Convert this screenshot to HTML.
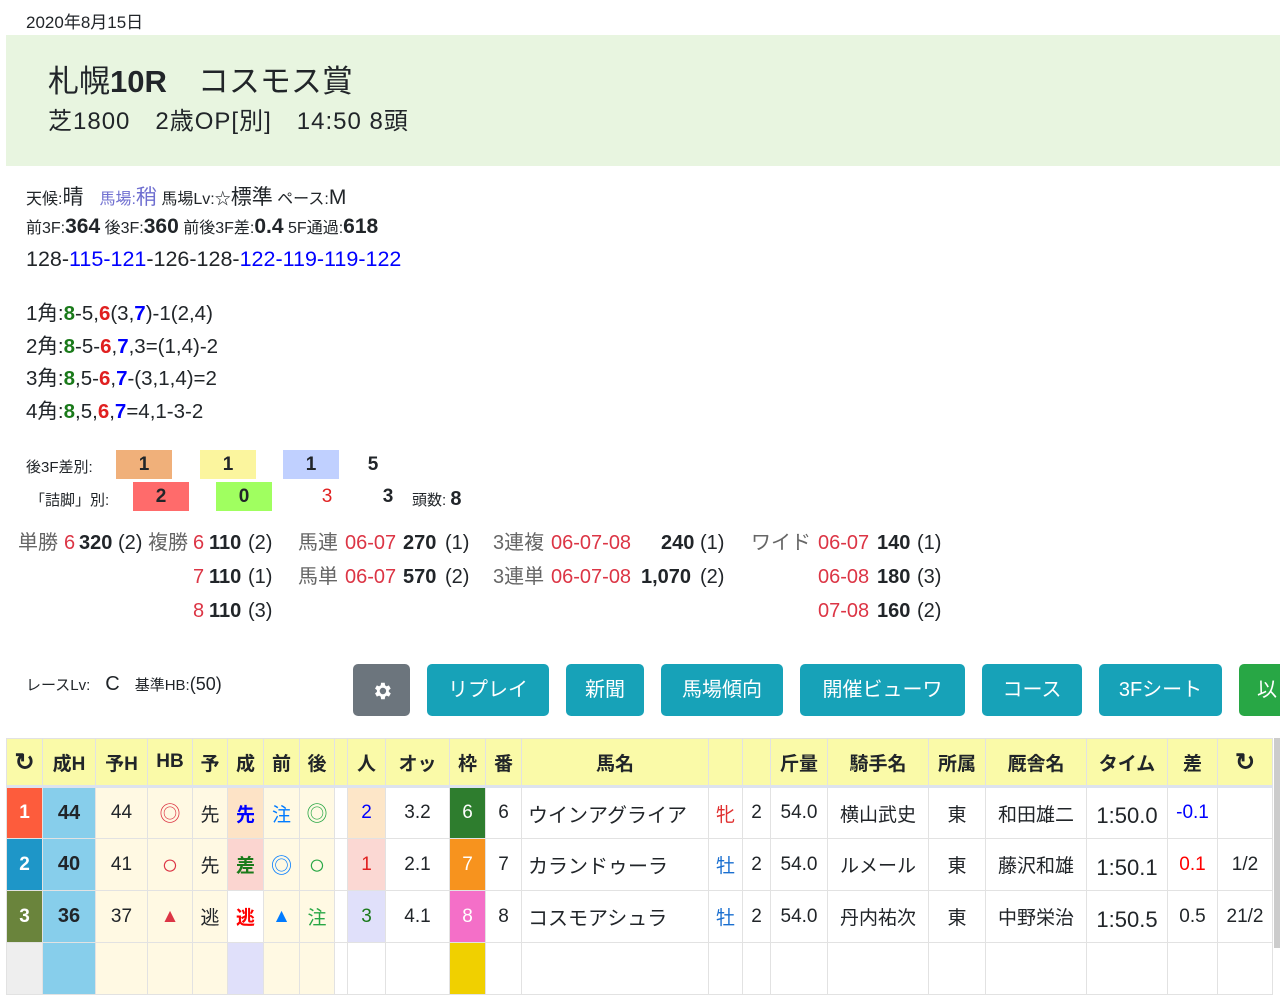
<!DOCTYPE html>
<html><head><meta charset="utf-8"><style>
*{box-sizing:border-box}
body{margin:0;width:1280px;height:948px;overflow:hidden;background:#fff;font-family:"Liberation Sans","Noto Sans CJK JP",sans-serif;color:#212529;position:relative}
.a{position:absolute;white-space:nowrap}
.b{font-weight:bold}
.r{color:#e02020}.bl{color:#0000ff}.g{color:#1a7a1a}.rr{color:#dc3545}.gy{color:#666}
.box{position:absolute;height:29px;width:56px;text-align:center;font-weight:bold;font-size:19px;line-height:29px}
.btn{position:absolute;top:664px;height:52px;border-radius:5px;background:#17a2b8;color:#fff;font-size:20px;line-height:52px;text-align:center}
table{position:absolute;left:6px;top:738px;border-collapse:collapse;table-layout:fixed;width:1266px}
td,th{border:1px solid #e2e2e2;text-align:center;padding:0;font-size:19px;font-weight:normal;overflow:hidden;white-space:nowrap}
th{background:#fafaa8;font-weight:bold;height:48px;border-bottom:3px solid #dde3ee}
td{height:52px}
.cr{background:#fff9e3}
.big{font-size:21px}
.p{position:absolute;white-space:nowrap;font-size:20px;line-height:30px}
</style></head><body>
<div class="a" style="left:26px;top:8px;font-size:17px">2020年8月15日</div>
<div class="a" style="left:6px;top:35px;width:1274px;height:131px;background:#e8f5e0"></div>
<div class="a" style="left:48px;top:56px;font-size:31px">札幌<b>10R</b>　コスモス賞</div>
<div class="a" style="left:48px;top:101px;font-size:24px;letter-spacing:1px">芝1800　2歳OP[別]　14:50 8頭</div>

<div class="a" style="left:26px;top:181px;font-size:16px">天候:<span style="font-size:21px">晴</span>　<span style="color:#6f6fd0">馬場:<span style="font-size:21px">稍</span></span> 馬場Lv:☆<span style="font-size:21px">標準</span> ペース:<span style="font-size:21px">M</span></div>
<div class="a" style="left:26px;top:214px;font-size:16px">前3F:<b style="font-size:21px">364</b> 後3F:<b style="font-size:21px">360</b> 前後3F差:<b style="font-size:21px">0.4</b> 5F通過:<b style="font-size:21px">618</b></div>
<div class="a" style="left:26px;top:247px;font-size:21.5px">128-<span class="bl">115-121</span>-126-128-<span class="bl">122-119-119-122</span></div>
<div class="a" style="left:26px;top:298px;font-size:20.5px;line-height:32.5px">1角:<b class="g">8</b>-5,<b class="r">6</b>(3,<b class="bl">7</b>)-1(2,4)<br>2角:<b class="g">8</b>-5-<b class="r">6</b>,<b class="bl">7</b>,3=(1,4)-2<br>3角:<b class="g">8</b>,5-<b class="r">6</b>,<b class="bl">7</b>-(3,1,4)=2<br>4角:<b class="g">8</b>,5,<b class="r">6</b>,<b class="bl">7</b>=4,1-3-2</div>

<div class="a" style="left:26px;top:456px;font-size:15px">後3F差別:</div>
<div class="box" style="left:116px;top:450px;background:#f0b07a">1</div>
<div class="box" style="left:200px;top:450px;background:#fbf59e">1</div>
<div class="box" style="left:283px;top:450px;background:#c0d0ff">1</div>
<div class="box" style="left:345px;top:450px">5</div>
<div class="a" style="left:30px;top:489px;font-size:15px">「詰脚」別:</div>
<div class="box" style="left:133px;top:482px;background:#ff6b6b">2</div>
<div class="box" style="left:216px;top:482px;background:#a0ff60">0</div>
<div class="box r" style="left:299px;top:482px;font-weight:normal">3</div>
<div class="box" style="left:360px;top:482px">3</div>
<div class="a" style="left:412px;top:488px;font-size:15px">頭数: <b style="font-size:20px">8</b></div>

<div class="p gy" style="left:18px;top:528px">単勝</div><div class="p rr" style="left:64px;top:528px">6</div><div class="p b" style="left:79px;top:528px">320</div><div class="p" style="left:118px;top:528px">(2)</div>
<div class="p gy" style="left:148px;top:528px">複勝</div><div class="p rr" style="left:193px;top:528px">6</div><div class="p b" style="left:209px;top:528px">110</div><div class="p" style="left:248px;top:528px">(2)</div>
<div class="p rr" style="left:193px;top:562px">7</div><div class="p b" style="left:209px;top:562px">110</div><div class="p" style="left:248px;top:562px">(1)</div>
<div class="p rr" style="left:193px;top:596px">8</div><div class="p b" style="left:209px;top:596px">110</div><div class="p" style="left:248px;top:596px">(3)</div>
<div class="p gy" style="left:298px;top:528px">馬連</div><div class="p rr" style="left:345px;top:528px">06-07</div><div class="p b" style="left:403px;top:528px">270</div><div class="p" style="left:445px;top:528px">(1)</div>
<div class="p gy" style="left:298px;top:562px">馬単</div><div class="p rr" style="left:345px;top:562px">06-07</div><div class="p b" style="left:403px;top:562px">570</div><div class="p" style="left:445px;top:562px">(2)</div>
<div class="p gy" style="left:493px;top:528px">3連複</div><div class="p rr" style="left:551px;top:528px">06-07-08</div><div class="p b" style="left:661px;top:528px">240</div><div class="p" style="left:700px;top:528px">(1)</div>
<div class="p gy" style="left:493px;top:562px">3連単</div><div class="p rr" style="left:551px;top:562px">06-07-08</div><div class="p b" style="left:641px;top:562px">1,070</div><div class="p" style="left:700px;top:562px">(2)</div>
<div class="p gy" style="left:751px;top:528px">ワイド</div><div class="p rr" style="left:818px;top:528px">06-07</div><div class="p b" style="left:877px;top:528px">140</div><div class="p" style="left:917px;top:528px">(1)</div>
<div class="p rr" style="left:818px;top:562px">06-08</div><div class="p b" style="left:877px;top:562px">180</div><div class="p" style="left:917px;top:562px">(3)</div>
<div class="p rr" style="left:818px;top:596px">07-08</div><div class="p b" style="left:877px;top:596px">160</div><div class="p" style="left:917px;top:596px">(2)</div>

<div class="a" style="left:26px;top:673px;font-size:15px">レースLv:　<span style="font-size:20px">C</span>　基準HB:<span style="font-size:18px">(50)</span></div>
<div class="btn" style="left:353px;width:57px;background:#6c757d"><svg width="22" height="22" viewBox="0 0 24 24" style="vertical-align:middle"><path fill="#fff" d="M19.4 13a7.5 7.5 0 0 0 0-2l2.1-1.6-2-3.5-2.5 1a7 7 0 0 0-1.7-1L15 3h-4l-.4 2.9a7 7 0 0 0-1.7 1l-2.5-1-2 3.5L6.5 11a7.5 7.5 0 0 0 0 2l-2.1 1.6 2 3.5 2.5-1a7 7 0 0 0 1.7 1L11 21h4l.4-2.9a7 7 0 0 0 1.7-1l2.5 1 2-3.5zM13 15.5a3.5 3.5 0 1 1 0-7 3.5 3.5 0 0 1 0 7z"/></svg></div>
<div class="btn" style="left:427px;width:122px">リプレイ</div>
<div class="btn" style="left:566px;width:78px">新聞</div>
<div class="btn" style="left:661px;width:122px">馬場傾向</div>
<div class="btn" style="left:800px;width:165px">開催ビューワ</div>
<div class="btn" style="left:982px;width:100px">コース</div>
<div class="btn" style="left:1099px;width:123px">3Fシート</div>
<div class="btn" style="left:1239px;width:60px;background:#28a745;text-align:left;padding-left:18px">以</div>

<table>
<colgroup><col style="width:36px"><col style="width:53px"><col style="width:52px"><col style="width:45px"><col style="width:35px"><col style="width:36px"><col style="width:36px"><col style="width:35px"><col style="width:13px"><col style="width:38px"><col style="width:64px"><col style="width:36px"><col style="width:36px"><col style="width:187px"><col style="width:34px"><col style="width:28px"><col style="width:57px"><col style="width:101px"><col style="width:57px"><col style="width:101px"><col style="width:81px"><col style="width:50px"><col style="width:55px"></colgroup>
<tr><th style="font-size:24px">↻</th><th>成H</th><th>予H</th><th>HB</th><th>予</th><th>成</th><th>前</th><th>後</th><th></th><th>人</th><th>オッ</th><th>枠</th><th>番</th><th>馬名</th><th></th><th></th><th>斤量</th><th>騎手名</th><th>所属</th><th>厩舎名</th><th>タイム</th><th>差</th><th style="font-size:24px">↻</th></tr>
<tr><td style="background:#fd5c3c;color:#fff;font-weight:bold">1</td><td style="background:#87ceeb;font-weight:bold;font-size:20px">44</td><td class="cr">44</td><td class="cr big" style="color:#dc3545">◎</td><td class="cr">先</td><td style="background:#fde3c6;color:#0000ff;font-weight:bold">先</td><td class="cr" style="color:#007bff">注</td><td class="cr big" style="color:#28a745">◎</td><td></td><td style="background:#fde6c8;color:#0000ff">2</td><td>3.2</td><td style="background:#2e7d2e;color:#fff">6</td><td>6</td><td style="text-align:left;padding-left:6px;font-size:20px">ウインアグライア</td><td style="color:#e03030">牝</td><td>2</td><td>54.0</td><td>横山武史</td><td>東</td><td>和田雄二</td><td style="font-size:22px;padding-top:6px">1:50.0</td><td style="color:#0000ff">-0.1</td><td></td></tr>
<tr><td style="background:#1e96c8;color:#fff;font-weight:bold">2</td><td style="background:#87ceeb;font-weight:bold;font-size:20px">40</td><td class="cr">41</td><td class="cr" style="color:#dc3545;font-size:28px">○</td><td class="cr">先</td><td style="background:#fbd5d0;color:#1a7a1a;font-weight:bold">差</td><td class="cr big" style="color:#007bff">◎</td><td class="cr" style="color:#28a745;font-size:28px">○</td><td></td><td style="background:#fbd8d3;color:#e02020">1</td><td>2.1</td><td style="background:#f7931e;color:#fff">7</td><td>7</td><td style="text-align:left;padding-left:6px;font-size:20px">カランドゥーラ</td><td style="color:#1a6fd0">牡</td><td>2</td><td>54.0</td><td>ルメール</td><td>東</td><td>藤沢和雄</td><td style="font-size:22px;padding-top:6px">1:50.1</td><td style="color:#ff0000">0.1</td><td>1/2</td></tr>
<tr><td style="background:#6a843c;color:#fff;font-weight:bold">3</td><td style="background:#87ceeb;font-weight:bold;font-size:20px">36</td><td class="cr">37</td><td class="cr" style="color:#dc3545">▲</td><td class="cr">逃</td><td style="color:#ff0000;font-weight:bold">逃</td><td class="cr" style="color:#007bff">▲</td><td class="cr" style="color:#28a745">注</td><td></td><td style="background:#e0e0fa;color:#1a7a1a">3</td><td>4.1</td><td style="background:#f46fc8;color:#fff">8</td><td>8</td><td style="text-align:left;padding-left:6px;font-size:20px">コスモアシュラ</td><td style="color:#1a6fd0">牡</td><td>2</td><td>54.0</td><td>丹内祐次</td><td>東</td><td>中野栄治</td><td style="font-size:22px;padding-top:6px">1:50.5</td><td>0.5</td><td>21/2</td></tr>
<tr><td style="background:#eee"></td><td style="background:#87ceeb"></td><td class="cr"></td><td class="cr"></td><td class="cr"></td><td style="background:#e0e0fa"></td><td class="cr"></td><td class="cr"></td><td></td><td></td><td></td><td style="background:#f0d000"></td><td></td><td></td><td></td><td></td><td></td><td></td><td></td><td></td><td></td><td></td><td></td></tr>
</table>
<div class="a" style="left:1274px;top:738px;width:6px;height:210px;background:#ccc"></div>
</body></html>
